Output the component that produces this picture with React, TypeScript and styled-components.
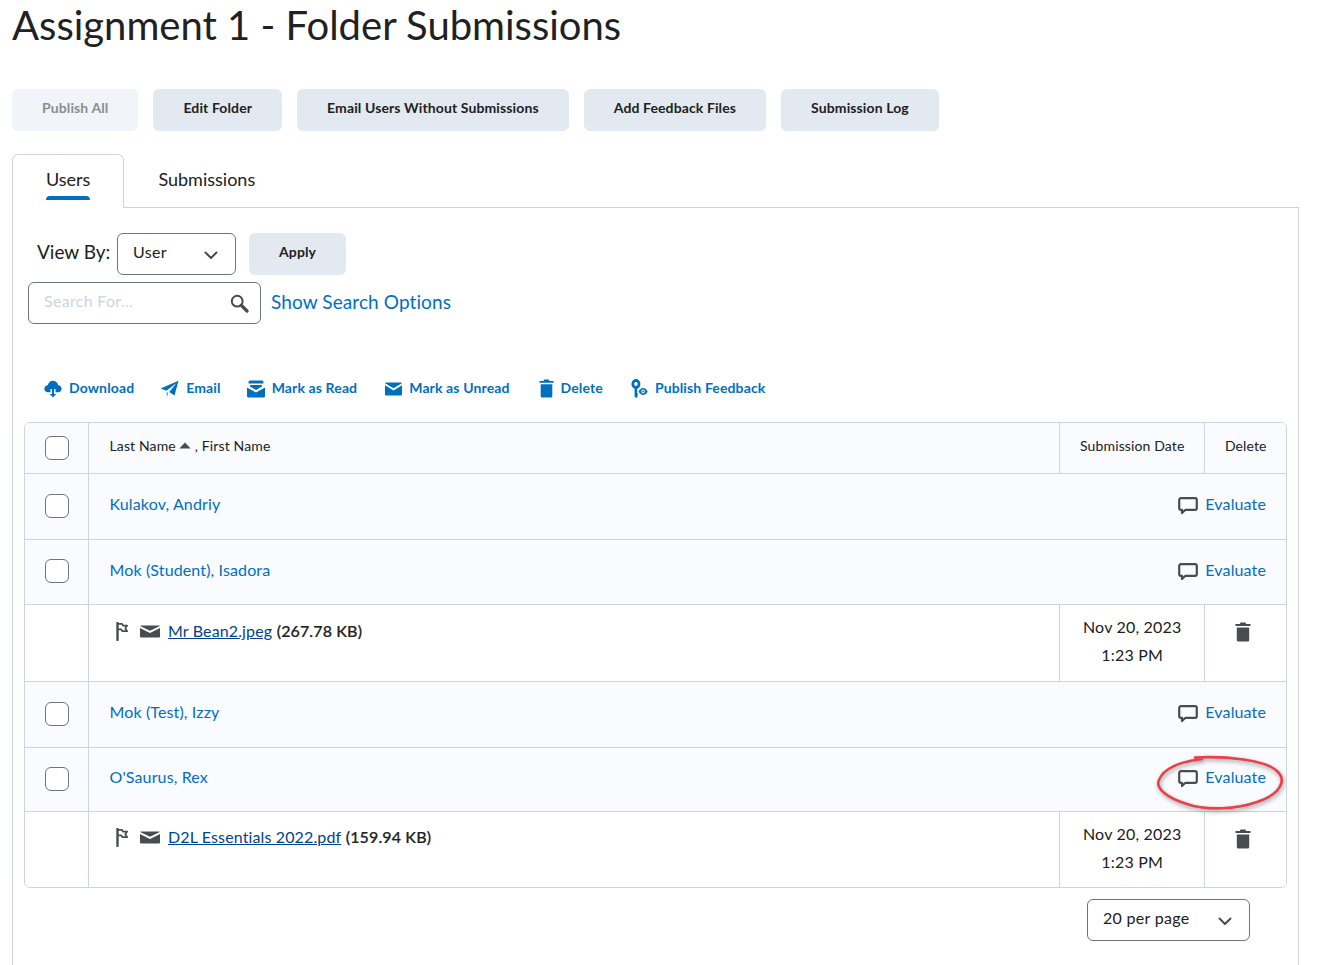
import styled, { createGlobalStyle } from "styled-components";

const Global = createGlobalStyle`
  html, body {
    margin: 0;
    padding: 0;
    background: #fff;
    font-family: Lato, "Open Sans", sans-serif;
    color: #202122;
    letter-spacing: 0.13px;
  }
`;

const Page = styled.div`
  height: 965px;
  overflow: hidden;
  padding: 0 37px 0 12px;
  display: flex;
  flex-direction: column;
  box-sizing: border-box;
`;
const Title = styled.h1`
  margin: 0;
  height: 89px;
  font-size: 40px;
  line-height: 50px;
  font-weight: 400;
  letter-spacing: 0;
  color: #202122;
`;
const ButtonRow = styled.div`
  display: flex;
  gap: 15px;
  margin-bottom: 23px;
`;
const Btn = styled.button<{ $disabled?: boolean }>`
  height: 42px;
  padding: 0 30px 6px;
  border: 0;
  border-radius: 6px;
  background: ${(p) => (p.$disabled ? "#f1f4f8" : "#e3e9f1")};
  color: ${(p) => (p.$disabled ? "#8b8d90" : "#202122")};
  font-family: inherit;
  font-size: 14px;
  font-weight: 700;
  letter-spacing: 0.115px;
`;
const Tabs = styled.div`
  display: flex;
  height: 54px;
`;
const Tab = styled.div<{ $active?: boolean }>`
  box-sizing: border-box;
  height: ${(p) => (p.$active ? "54px" : "53px")};
  padding: 0 33px;
  font-size: 18px;
  line-height: 48px;
  letter-spacing: 0;
  position: relative;
  z-index: 1;
  background: #fff;
  color: #202122;
  border: 1px solid ${(p) => (p.$active ? "#cdd5dc" : "transparent")};
  border-bottom: 0;
  border-radius: 6px 6px 0 0;
  span {
    display: block;
    height: 100%;
    position: relative;
  }
  ${(p) =>
    p.$active &&
    `span::after {
      content: "";
      position: absolute;
      left: 0;
      right: 0;
      top: 41px;
      height: 4px;
      border-radius: 4px 4px 0 0;
      background: #006fbf;
    }`}
`;
const Panel = styled.div`
  flex: 1;
  margin-top: -1px;
  border: 1px solid #cdd5dc;
  border-bottom: 0;
  padding: 25px 11px 0;
  box-sizing: border-box;
`;
const FilterRow = styled.div`
  display: flex;
  align-items: center;
  height: 42px;
  padding-left: 13px;
`;
const ViewLabel = styled.label`
  width: 74px;
  font-size: 19px;
  letter-spacing: 0;
  margin-right: 6px;
  padding-bottom: 5px;
  white-space: nowrap;
`;
const Select = styled.div<{ $w: number }>`
  box-sizing: border-box;
  width: ${(p) => p.$w}px;
  height: 42px;
  border: 1px solid #6e7477;
  border-radius: 6px;
  display: flex;
  align-items: center;
  justify-content: space-between;
  padding: 0 17px 5px 15px;
  font-size: 16px;
  letter-spacing: 0.3px;
  background: #fff;
  svg {
    margin-top: 7px;
  }
`;
const ApplyBtn = styled(Btn)`
  margin-left: 13px;
`;
const SearchRow = styled.div`
  display: flex;
  align-items: center;
  margin-top: 7px;
  padding-left: 4px;
`;
const SearchBox = styled.div`
  box-sizing: border-box;
  width: 233px;
  height: 42px;
  border: 1px solid #6e7477;
  border-radius: 6px;
  display: flex;
  align-items: center;
  justify-content: space-between;
  padding: 0 11px 0 15px;
  font-size: 16px;
  letter-spacing: 0.3px;
  color: #cdd5dc;
  svg {
    margin-top: 1px;
  }
`;
const Placeholder = styled.span`
  padding-bottom: 6px;
`;
const SearchLink = styled.a`
  margin-left: 10px;
  padding-bottom: 4px;
  color: #006fbf;
  font-size: 19px;
  letter-spacing: 0.1px;
`;
const Actions = styled.div`
  display: flex;
  align-items: center;
  height: 32px;
  margin-top: 47px;
  margin-bottom: 19px;
  padding-left: 20px;
`;
const Action = styled.a<{ $gap: number }>`
  display: flex;
  align-items: center;
  gap: 7px;
  margin-right: ${(p) => p.$gap}px;
  color: #006fbf;
  font-size: 14px;
  font-weight: 700;
  svg {
    flex: none;
    margin-top: 3px;
  }
`;
const TableWrap = styled.table`
  width: 1263px;
  table-layout: fixed;
  border-collapse: separate;
  border-spacing: 0;
  border: 1px solid #cdd5dc;
  border-radius: 6px;
  overflow: hidden;
`;
const Row = styled.tr<{ $h: number; $shade?: boolean }>`
  height: ${(p) => p.$h}px;
  background: ${(p) => (p.$shade ? "#f9fbff" : "#fff")};
  &:last-child td {
    border-bottom: 0;
  }
`;
const Cell = styled.td<{ $top?: boolean; $center?: boolean; $head?: boolean }>`
  box-sizing: border-box;
  padding: 0 20px 0 20.5px;
  border-bottom: 1px solid #cdd5dc;
  border-left: 1px solid #cdd5dc;
  vertical-align: ${(p) => (p.$top ? "top" : "middle")};
  text-align: ${(p) => (p.$center ? "center" : "left")};
  font-size: ${(p) => (p.$head ? "14px" : "16px")};
  &:first-child {
    border-left: 0;
    padding: 0 20px;
  }
`;
const HeadName = styled.span`
  display: flex;
  align-items: center;
  gap: 3.5px;
  padding-bottom: 5px;
`;
const HeadLabel = styled.span`
  display: block;
  margin: 0 -10px;
  padding-bottom: 5px;
  white-space: nowrap;
`;
const Check = styled.div<{ $raised?: boolean }>`
  box-sizing: border-box;
  width: 24px;
  height: 24px;
  margin: ${(p) => (p.$raised ? "-2px" : "0")} 0 0;
  border: 1px solid #6e7477;
  border-radius: 6px;
  background: #fff;
`;
const NameBar = styled.div`
  display: flex;
  justify-content: space-between;
  align-items: center;
  padding-bottom: 6px;
`;
const NameLink = styled.a`
  color: #006fbf;
`;
const EvalLink = styled.a`
  display: flex;
  align-items: center;
  gap: 7px;
  color: #006fbf;
  position: relative;
  svg {
    margin-top: 5px;
  }
`;
const Circle = styled.svg`
  position: absolute;
  left: -21px;
  top: -14px;
  pointer-events: none;
  overflow: visible;
`;
const FileLine = styled.div<{ $pad: number }>`
  display: flex;
  align-items: center;
  padding: ${(p) => p.$pad}px 0 0 6.5px;
  line-height: 20px;
  svg {
    flex: none;
  }
`;
const FileLink = styled.a`
  color: #004489;
  text-decoration: underline;
  margin-left: 8px;
`;
const FileSize = styled.span`
  font-weight: 500;
  margin-left: 4.5px;
  -webkit-text-stroke: 0.2px #202122;
`;
const IconGap = styled.span`
  width: 11px;
`;
const DateLines = styled.div`
  padding-top: 8px;
  line-height: 28px;
  letter-spacing: 0.2px;
`;
const TrashWrap = styled.div`
  padding: 17px 5px 0 0;
  text-align: center;
`;
const Pager = styled.div`
  display: flex;
  justify-content: flex-end;
  margin-top: 11px;
  padding-right: 37px;
`;

const Chevron = () => (
  <svg width="14" height="9" viewBox="0 0 14 9">
    <path d="M1.500 1.500 7 7l5.500-5.500" fill="none" stroke="#494c4e" strokeWidth="2" strokeLinecap="round" strokeLinejoin="round" />
  </svg>
);
const SearchIcon = () => (
  <svg width="19" height="19" viewBox="0 0 19 19">
    <circle cx="7.200" cy="7.200" r="5.400" fill="none" stroke="#494c4e" strokeWidth="2" />
    <path d="M11.500 11.500 17 17" stroke="#494c4e" strokeWidth="3.200" strokeLinecap="round" />
  </svg>
);
const DownloadIcon = () => (
  <svg width="18" height="18" viewBox="0 0 18 18">
    <path d="M9 .8c2.500 0 4.600 1.700 5.100 4.100C16 5.200 17.600 6.800 17.600 8.900c0 1.900-1.500 3.300-3.400 3.300h-2.700V9H6.500v3.200H3.800C1.900 12.200.4 10.800.4 8.900c0-2.100 1.600-3.700 3.500-4C4.400 2.500 6.500.8 9 .8Z" fill="#006fbf" />
    <path d="M8 8.500h2V14h2.200L9 17.600 5.800 14H8Z" fill="#006fbf" />
  </svg>
);
const EmailIcon = () => (
  <svg width="19" height="18" viewBox="0 0 19 18">
    <path d="M18.500.7 14.500 15.500 9.300 12l7-8.800L6.400 10.800.6 8.500Z" fill="#006fbf" />
    <path d="M6.800 12l1.200.9L6.800 17.300Z" fill="#006fbf" />
  </svg>
);
const ReadIcon = () => (
  <svg width="18" height="18" viewBox="0 0 18 18">
    <path d="M3 .5h12A1.500 1.500 0 0 1 16.500 2v1.500h-15V2A1.500 1.500 0 0 1 3 .5ZM3 5h12v1.500L9 10 3 6.500Z" fill="#006fbf" />
    <path d="M0 7.500 9 12.500l9-5V16a1.500 1.500 0 0 1-1.500 1.500h-15A1.500 1.500 0 0 1 0 16Z" fill="#006fbf" />
  </svg>
);
const EnvelopeIcon = ({ color, w = 17, h = 14 }: { color: string; w?: number; h?: number }) => (
  <svg width={w} height={h} viewBox="0 0 18 14" preserveAspectRatio="none">
    <path d="M1 .5h16a1 1 0 0 1 .9.7L9 6.300.1 1.200A1 1 0 0 1 1 .5Z" fill={color} />
    <path d="M0 3.300 9 8.500l9-5.200V12.500a1 1 0 0 1-1 1H1a1 1 0 0 1-1-1Z" fill={color} />
  </svg>
);
const TrashIcon = ({ color, w = 16, h = 20 }: { color: string; w?: number; h?: number }) => (
  <svg width={w} height={h} viewBox="0 0 16 19" preserveAspectRatio="none">
    <path d="M5.500.5h5l.6 1.500H15.500v1.800H.5V2h4.400Z" fill={color} />
    <path d="M1.800 5.200h12.400V17a1.600 1.600 0 0 1-1.600 1.600H3.400A1.600 1.600 0 0 1 1.800 17Z" fill={color} />
  </svg>
);
const PublishIcon = () => (
  <svg width="17" height="19" viewBox="0 0 19 19" preserveAspectRatio="none">
    <circle cx="5.500" cy="5" r="3.500" fill="none" stroke="#006fbf" strokeWidth="3" />
    <path d="M4 8h3v6.500l1 1.200-1 1 .6 1-2 1.300L4 17.500Z" fill="#006fbf" />
    <path d="M8.500 12.500c1.600-2.600 3.200-3.400 5-3.400s3.600.8 5.100 3.400c-1.500 2.600-3.300 3.400-5.100 3.400s-3.400-.8-5-3.400Z" fill="#006fbf" />
    <circle cx="13.500" cy="12.500" r="2" fill="#fff" />
    <circle cx="13.500" cy="12.500" r="1" fill="#006fbf" />
  </svg>
);
const BubbleIcon = () => (
  <svg width="20" height="18" viewBox="0 0 20 18">
    <path d="M3 1.200h14A1.800 1.800 0 0 1 18.800 3v8A1.800 1.800 0 0 1 17 12.800H7.500L4 16v-3.200H3A1.800 1.800 0 0 1 1.200 11V3A1.800 1.800 0 0 1 3 1.200Z" fill="none" stroke="#494c4e" strokeWidth="2.200" strokeLinejoin="round" />
  </svg>
);
const FlagIcon = () => (
  <svg width="13" height="19" viewBox="0 0 13 19">
    <path d="M1.500 1v17" stroke="#494c4e" strokeWidth="2.400" strokeLinecap="round" />
    <path d="M2 1.800h4l1 1.800h4.200L9.300 6.300l1.900 2.900H6.300l-1-1.900H2" fill="none" stroke="#494c4e" strokeWidth="1.700" strokeLinejoin="round" />
  </svg>
);
const SortArrow = () => (
  <svg width="12" height="7" viewBox="0 0 12 7">
    <path d="M6 .5 11.700 6.500H.3Z" fill="#494c4e" />
  </svg>
);

function Evaluate({ circled }: { circled?: boolean }) {
  return (
    <EvalLink>
      <BubbleIcon />
      Evaluate
      {circled && (
        <Circle width="126" height="54" viewBox="0 0 126 54">
          <path
            d="M38 1.500C70 0 108 4 120 15c10 9 4 23-20 31-20 7-50 9-70 2C10 42-2 32 2 24 6 14 20 6 45 3"
            fill="none"
            stroke="#ea4048"
            strokeWidth="2.600"
            strokeLinecap="round"
            style={{ filter: "drop-shadow(1px 2px 2px rgba(0,0,0,0.4))" }}
          />
        </Circle>
      )}
    </EvalLink>
  );
}

function UserRow({ name, h, circled }: { name: string; h: number; circled?: boolean }) {
  return (
    <Row $h={h} $shade>
      <Cell>
        <Check $raised />
      </Cell>
      <Cell colSpan={3}>
        <NameBar>
          <NameLink>{name}</NameLink>
          <Evaluate circled={circled} />
        </NameBar>
      </Cell>
    </Row>
  );
}

function FileRow({ file, size, h, pad }: { file: string; size: string; h: number; pad: number }) {
  return (
    <Row $h={h}>
      <Cell />
      <Cell $top>
        <FileLine $pad={pad}>
          <FlagIcon />
          <IconGap />
          <EnvelopeIcon color="#494c4e" w={20} h={13} />
          <FileLink>{file}</FileLink>
          <FileSize>({size})</FileSize>
        </FileLine>
      </Cell>
      <Cell $top $center>
        <DateLines>
          Nov 20, 2023
          <br />
          1:23 PM
        </DateLines>
      </Cell>
      <Cell $top $center>
        <TrashWrap>
          <TrashIcon color="#494c4e" />
        </TrashWrap>
      </Cell>
    </Row>
  );
}

export default function App() {
  return (
    <Page>
      <Global />
      <Title>Assignment 1 - Folder Submissions</Title>
      <ButtonRow>
        <Btn $disabled>Publish All</Btn>
        <Btn>Edit Folder</Btn>
        <Btn>Email Users Without Submissions</Btn>
        <Btn>Add Feedback Files</Btn>
        <Btn>Submission Log</Btn>
      </ButtonRow>
      <Tabs>
        <Tab $active>
          <span>Users</span>
        </Tab>
        <Tab>
          <span>Submissions</span>
        </Tab>
      </Tabs>
      <Panel>
        <FilterRow>
          <ViewLabel>View By:</ViewLabel>
          <Select $w={119}>
            User
            <Chevron />
          </Select>
          <ApplyBtn>Apply</ApplyBtn>
        </FilterRow>
        <SearchRow>
          <SearchBox>
            <Placeholder>Search For...</Placeholder>
            <SearchIcon />
          </SearchBox>
          <SearchLink>Show Search Options</SearchLink>
        </SearchRow>
        <Actions>
          <Action $gap={26}>
            <DownloadIcon />
            Download
          </Action>
          <Action $gap={26}>
            <EmailIcon />
            Email
          </Action>
          <Action $gap={28}>
            <ReadIcon />
            Mark as Read
          </Action>
          <Action $gap={29}>
            <EnvelopeIcon color="#006fbf" />
            Mark as Unread
          </Action>
          <Action $gap={28}>
            <TrashIcon color="#006fbf" w={15} h={19} />
            Delete
          </Action>
          <Action $gap={0}>
            <PublishIcon />
            Publish Feedback
          </Action>
        </Actions>
        <TableWrap>
          <colgroup>
            <col style={{ width: 63 }} />
            <col />
            <col style={{ width: 145 }} />
            <col style={{ width: 82 }} />
          </colgroup>
          <tbody>
            <Row $h={51} $shade>
              <Cell>
                <Check />
              </Cell>
              <Cell $head>
                <HeadName>
                  Last Name <SortArrow /> , First Name
                </HeadName>
              </Cell>
              <Cell $head $center>
                <HeadLabel>Submission Date</HeadLabel>
              </Cell>
              <Cell $head $center>
                <HeadLabel>Delete</HeadLabel>
              </Cell>
            </Row>
            <UserRow name="Kulakov, Andriy" h={66} />
            <UserRow name="Mok (Student), Isadora" h={65} />
            <FileRow file="Mr Bean2.jpeg" size="267.78 KB" h={77} pad={16} />
            <UserRow name="Mok (Test), Izzy" h={66} />
            <UserRow name="O'Saurus, Rex" h={64} circled />
            <FileRow file="D2L Essentials 2022.pdf" size="159.94 KB" h={75} pad={15} />
          </tbody>
        </TableWrap>
        <Pager>
          <Select $w={163}>
            20 per page
            <Chevron />
          </Select>
        </Pager>
      </Panel>
    </Page>
  );
}
